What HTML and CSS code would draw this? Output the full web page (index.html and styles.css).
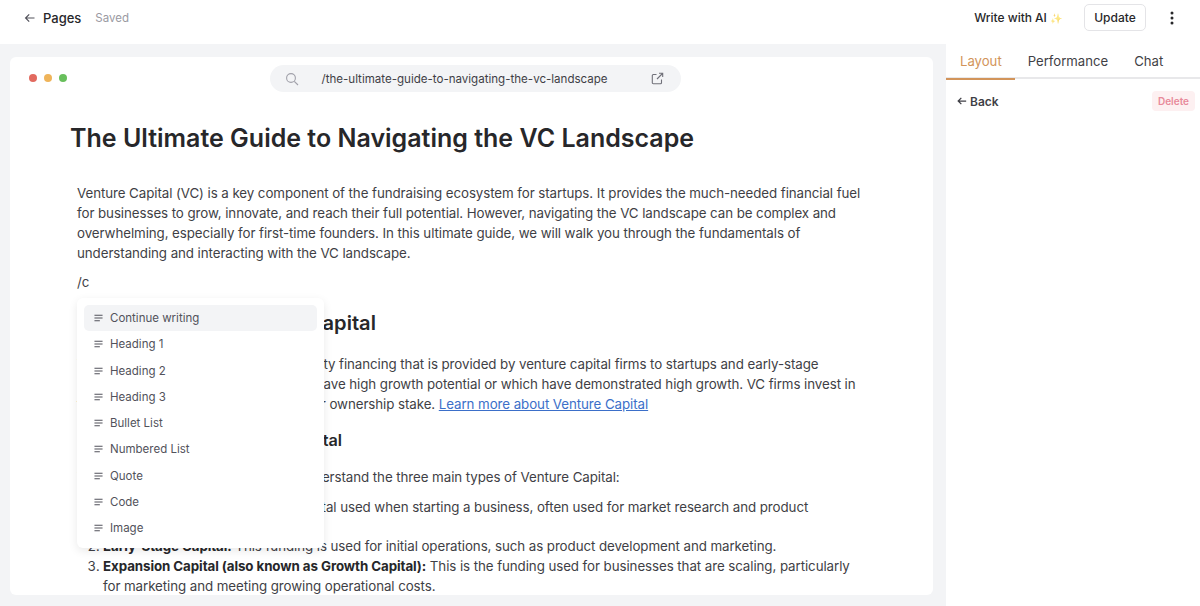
FILE: index.html

```html
<!DOCTYPE html>
<html lang="en">
<head>
  <meta charset="UTF-8" />
  <title>Pages</title>
  <link rel="stylesheet" href="styles.css">
</head>
<body>
  <header class="topbar">
    <div class="top-left">
      <svg class="back-icon" width="12" height="12" viewBox="0 0 12 12"><path d="M10.5 6H1.8M5.2 2.4 1.6 6l3.6 3.6" /></svg>
      <span class="pages">Pages</span>
      <span class="saved">Saved</span>
    </div>
    <div class="top-right">
      <span class="ai">Write with AI <span class="spark">✨</span></span>
      <button class="update">Update</button>
      <svg class="more" width="4" height="14" viewBox="0 0 4 14"><circle cx="2" cy="2" r="1.5"/><circle cx="2" cy="7" r="1.5"/><circle cx="2" cy="12" r="1.5"/></svg>
    </div>
  </header>

  <div class="main">
    <div class="canvas">
      <div class="browser">
        <div class="chrome">
          <div class="dots"><i class="red"></i><i class="yellow"></i><i class="green"></i></div>
          <div class="url">
            <svg class="search" width="14" height="14" viewBox="0 0 14 14"><circle cx="6" cy="6" r="4.4"/><path d="m9.3 9.3 3.7 3.7"/></svg>
            <span class="slug">/the-ultimate-guide-to-navigating-the-vc-landscape</span>
            <svg class="open" width="13" height="13" viewBox="0 0 13 13"><path d="M10.5 7.5v3.2a1 1 0 0 1-1 1H2.3a1 1 0 0 1-1-1V3.5a1 1 0 0 1 1-1h3.2M8 1.3h3.7V5M11.5 1.5 6 7"/></svg>
          </div>
        </div>

        <h1>The Ultimate Guide to Navigating the VC Landscape</h1>

        <div class="content">
          <p>Venture Capital (VC) is a key component of the fundraising ecosystem for startups. It provides the much-needed financial fuel for businesses to grow, innovate, and reach their full potential. However, navigating the VC landscape can be complex and overwhelming, especially for first-time founders. In this ultimate guide, we will walk you through the fundamentals of understanding and interacting with the VC landscape.</p>
          <p class="slash">/c</p>
          <h2>Understanding Venture Capital</h2>
          <p class="lead">Venture Capital is a form of private equity financing that is provided by venture capital firms to startups and early-stage companies that are widely believed to have high growth potential or which have demonstrated high growth. VC firms invest in these young companies in exchange for ownership stake. <a href="#">Learn more about Venture Capital</a></p>
          <h3>Different Types of Venture Capital</h3>
          <p class="lead">To get started, it is first essential to understand the three main types of Venture Capital:</p>
          <ol>
            <li class="first"><b>Seed Capital:</b> This is the initial capital used when starting a business, often used for market research and product development.</li>
            <li><b>Early-Stage Capital:</b> This funding is used for initial operations, such as product development and marketing.</li>
            <li><b>Expansion Capital (also known as Growth Capital):</b> This is the funding used for businesses that are scaling, particularly for marketing and meeting growing operational costs.</li>
          </ol>
        </div>

        <ul class="slash-menu">
          <li class="active"><svg viewBox="0 0 10 8"><path d="M.5 1h9M.5 4h9M.5 7h6"/></svg>Continue writing</li>
          <li><svg viewBox="0 0 10 8"><path d="M.5 1h9M.5 4h9M.5 7h6"/></svg>Heading 1</li>
          <li><svg viewBox="0 0 10 8"><path d="M.5 1h9M.5 4h9M.5 7h6"/></svg>Heading 2</li>
          <li><svg viewBox="0 0 10 8"><path d="M.5 1h9M.5 4h9M.5 7h6"/></svg>Heading 3</li>
          <li><svg viewBox="0 0 10 8"><path d="M.5 1h9M.5 4h9M.5 7h6"/></svg>Bullet List</li>
          <li><svg viewBox="0 0 10 8"><path d="M.5 1h9M.5 4h9M.5 7h6"/></svg>Numbered List</li>
          <li><svg viewBox="0 0 10 8"><path d="M.5 1h9M.5 4h9M.5 7h6"/></svg>Quote</li>
          <li><svg viewBox="0 0 10 8"><path d="M.5 1h9M.5 4h9M.5 7h6"/></svg>Code</li>
          <li><svg viewBox="0 0 10 8"><path d="M.5 1h9M.5 4h9M.5 7h6"/></svg>Image</li>
        </ul>
      </div>
    </div>

    <aside class="sidebar">
      <nav class="tabs">
        <span class="tab active">Layout</span>
        <span class="tab">Performance</span>
        <span class="tab">Chat</span>
      </nav>
      <div class="side-row">
        <span class="side-back">
          <svg class="back-icon small" width="10" height="10" viewBox="0 0 12 12"><path d="M11 6H1.5M5.2 2.2 1.4 6l3.8 3.8" /></svg>
          Back
        </span>
        <span class="delete">Delete</span>
      </div>
    </aside>
  </div>
</body>
</html>
```

FILE: styles.css

```css
* { box-sizing: border-box; }
body { margin: 0; height: 606px; overflow: hidden; background: #fff; color: #27272a; font-family: Inter, "Noto Sans", sans-serif; }

.topbar { height: 44px; display: flex; justify-content: space-between; align-items: center; padding: 0 24px 8px; background: #fff; }
.top-left { display: flex; align-items: center; }
.back-icon { fill: none; stroke: #52525b; stroke-width: 1.2; }
.pages { margin-left: 7px; font-size: 13px; font-weight: 500; color: #27272a; }
.saved { margin-left: 14px; font-size: 11.5px; color: #9a9aa2; }
.top-right { display: flex; align-items: center; }
.ai { margin-top: -1px; font-size: 12px; font-weight: 500; letter-spacing: -.02px; color: #27272a; }
.spark { font-size: 10px; color: #fde68a; opacity: .6; }
.update { margin-left: 22px; margin-top: -1px; width: 62px; height: 27px; padding: 0; background: #fff; border: 1px solid #e4e4e7; border-radius: 5px; font: 500 12px Inter, sans-serif; color: #27272a; }
.more { margin-left: 24px; margin-right: 2px; fill: #27272a; }

.main { height: 562px; display: flex; background: #f3f4f6; }
.canvas { flex: 1; padding: 13px 13px 11px 10px; overflow: hidden; }
.browser { position: relative; height: 538px; background: #fff; border-radius: 6px; overflow: hidden; }

.chrome { position: relative; height: 42px; display: flex; align-items: center; justify-content: center; }
.dots { position: absolute; left: 19px; top: 17px; display: flex; gap: 7px; }
.dots i { width: 8px; height: 8px; border-radius: 50%; }
.red { background: #e26a5f; }
.yellow { background: #efb45a; }
.green { background: #68bf5c; }
.url { margin-top: 1px; margin-left: 7px; width: 411px; height: 27px; display: flex; align-items: center; background: #f3f4f6; border-radius: 14px; padding: 0 17px 0 15px; font-size: 11.55px; color: #3f3f46; }
.search { flex: none; fill: none; stroke: #a1a1aa; stroke-width: 1.1; }
.slug { flex: 1; margin-left: 23px; }
.open { flex: none; fill: none; stroke: #71717a; stroke-width: 1.1; }

h1 { margin: 22px 0 0 60px; font-size: 25px; line-height: 34px; font-weight: 600; color: #27272a; }

.content { margin: 28px 0 0 67px; width: 790px; font-size: 13.35px; letter-spacing: -.085px; line-height: 20px; color: #3f3f46; }
.content p { margin: 0; }
.content .slash { margin-top: 9px; }
h2 { margin: 18px 0 0; font-size: 20.1px; line-height: 26px; font-weight: 600; letter-spacing: 0; color: #27272a; }
.content .lead { margin-top: 18px; }
h3 { margin: 16px 0 0; font-size: 16.2px; line-height: 20px; font-weight: 600; letter-spacing: 0; color: #27272a; }
.content h3 + .lead { margin-top: 17px; }
a { color: #3b6fc9; }
ol { margin: 10px 0 0; padding-left: 26px; }
.first { margin-bottom: -1px; }
b { font-weight: 700; color: #27272a; }

.slash-menu { position: absolute; left: 67px; top: 241px; width: 247px; height: 250px; margin: 0; padding: 7px; list-style: none; background: #fff; border-radius: 6px; box-shadow: 0 3px 10px rgba(0, 0, 0, .09); }
.slash-menu li { height: 26.25px; display: flex; align-items: center; padding-left: 10px; border-radius: 5px; font-size: 11.5px; color: #52525b; }
.slash-menu li.active { background: #f3f4f6; }
.slash-menu svg { width: 9px; height: 8px; margin-right: 7px; fill: none; stroke: #52525b; stroke-width: 1.15; }

.sidebar { width: 254px; background: #fff; }
.tabs { height: 35px; display: flex; border-bottom: 2px solid #e8e8ea; padding-top: 1px; }
.tab { padding: 0 13px; height: 35px; line-height: 32px; font-size: 13.15px; color: #3f3f46; }
.tab.active { padding-left: 14px; color: #d2945a; border-bottom: 2px solid #d2945a; }
.side-row { display: flex; justify-content: space-between; align-items: center; padding: 12px 5px 0 11px; }
.side-back { display: flex; align-items: center; gap: 3px; font-size: 12px; font-weight: 600; color: #3f3f46; }
.back-icon.small { stroke: #3f3f46; stroke-width: 1.5; }
.delete { height: 20px; line-height: 20px; padding: 0 6px; background: #fdf0f1; border-radius: 4px; font-size: 10px; font-weight: 600; color: #e88a9a; }
```
